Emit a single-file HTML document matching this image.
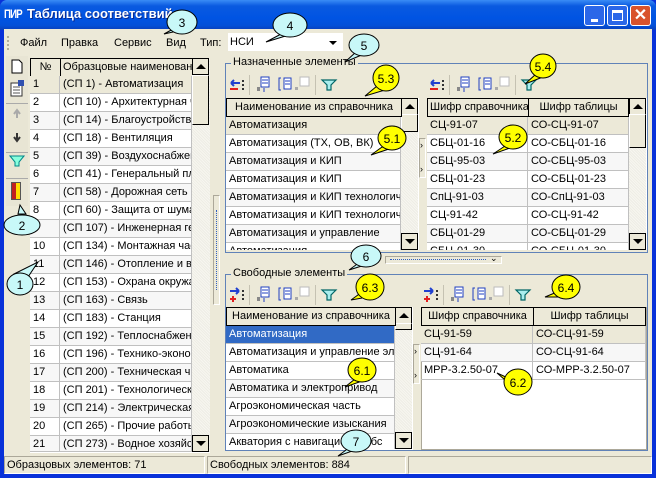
<!DOCTYPE html>
<html><head><meta charset="utf-8"><style>
*{box-sizing:border-box;margin:0;padding:0}
body{width:656px;height:478px;overflow:hidden;background:#0831d9;font-family:"Liberation Sans",sans-serif;font-size:11px;color:#000;position:relative}
.a{position:absolute}
#tb{left:0;top:0;width:656px;height:30px;background:linear-gradient(#3a8cf6,#0a5ae0 20%,#0054e3 60%,#0350d8 85%,#0a3fb8);border-radius:7px 7px 0 0}
#cl{left:4px;top:29px;width:648px;height:445px;background:#ece9d8}
.cell{position:absolute;overflow:hidden;white-space:nowrap;border-right:1px solid #c0c0c0;border-bottom:1px solid #c0c0c0;padding-left:3px;line-height:17px;height:18px}
.hd{position:absolute;border:1px solid #000;border-right:1px solid #000;background:#ece9d8;text-align:center;line-height:16px;white-space:nowrap;overflow:hidden}
.sb{position:absolute;background:#f2f1ea;background-image:repeating-linear-gradient(45deg,#eeede5 0 1px,#f7f6f0 1px 2px)}
.sbb{position:absolute;width:17px;height:17px;background:#ece9d8;border:1px solid #000;}
.sbb:after{content:"";position:absolute;left:3px;border-left:5px solid transparent;border-right:5px solid transparent}
.up:after{top:5px;border-bottom:5px solid #000}
.dn:after{top:5px;border-top:5px solid #000}
.th{position:absolute;width:17px;background:#ece9d8;border:1px solid #000;border-top:1px solid #fff;border-left:1px solid #fff}
.grp{position:absolute;border:1px solid #6082b8}
.gl{position:absolute;background:#ece9d8;padding:0 2px;font-size:11px}
.tbar{position:absolute;height:21px;background:#ece9d8}
</style></head><body>
<div id="tb" class="a"></div>
<div class="a" style="left:4px;top:7px;width:20px;height:16px;color:#fff;font:bold 12px 'Liberation Sans',sans-serif;letter-spacing:-1px;transform:scaleX(0.8);transform-origin:left">ПИР</div>
<div class="a" style="left:27px;top:6px;color:#fff;font:bold 13px 'Liberation Sans',sans-serif;text-shadow:1px 1px #0a2a90">Таблица соответствий</div>
<div class="a" style="left:584px;top:5px;width:21px;height:21px;border:1px solid #fff;border-radius:3px;background:#2b67e8"><div class="a" style="left:6px;top:13px;width:7px;height:3px;background:#fff"></div></div>
<div class="a" style="left:607px;top:5px;width:21px;height:21px;border:1px solid #fff;border-radius:3px;background:#2b67e8"><div class="a" style="left:4px;top:4px;width:11px;height:11px;border:1px solid #fff;border-top:3px solid #fff"></div></div>
<div class="a" style="left:630px;top:5px;width:21px;height:21px;border:1px solid #fff;border-radius:3px;background:#d9532c;color:#fff;font:bold 16px 'Liberation Sans';text-align:center;line-height:19px">✕</div>
<div id="cl" class="a"></div>
<!-- menu -->
<div class="a" style="left:7px;top:36px;width:2px;height:14px;border-left:2px dotted #b0ad9c"></div>
<div class="a" style="left:20px;top:37px">Файл</div>
<div class="a" style="left:61px;top:37px">Правка</div>
<div class="a" style="left:114px;top:37px">Сервис</div>
<div class="a" style="left:166px;top:37px">Вид</div>
<div class="a" style="left:200px;top:37px">Тип:</div>
<div class="a" style="left:228px;top:33px;width:115px;height:18px;background:#fff;padding:3px 0 0 2px">НСИ</div>
<div class="a" style="left:329px;top:41px;border-left:4px solid transparent;border-right:4px solid transparent;border-top:4px solid #000"></div>
<!-- left toolbar -->
<div class="a" style="left:6px;top:56px;width:22px;height:150px;background:#e8e5d4"></div>
<svg class="a" style="left:9px;top:59px" width="16" height="120" viewBox="0 0 16 120">
<path d="M3 1h7l3 3v10H3z" fill="#fff" stroke="#000"/>
<rect x="2" y="24" width="11" height="13" fill="#fff" stroke="#333"/><path d="M4 28h7M4 31h7M4 34h7" stroke="#555"/><rect x="9" y="21" width="6" height="6" fill="#3050b0"/>
<path d="M8 52v7M5 55l3-4 3 4" stroke="#aaa" stroke-width="2" fill="none"/>
<path d="M8 74v6M5 78l3 4 3-4" stroke="#333" stroke-width="2" fill="none"/>
<path d="M1 97h14l-5 6v4h-4v-4z" fill="#8fd" stroke="#088"/>
</svg>
<div class="a" style="left:11px;top:182px;width:10px;height:18px;background:#ffdd00;border:1px solid #555"><div style="width:4px;height:16px;background:#c02020"></div></div>
<div class="a" style="left:6px;top:103px;width:22px;height:1px;background:#aaa"></div>
<div class="a" style="left:6px;top:152px;width:22px;height:1px;background:#aaa"></div>
<div class="a" style="left:6px;top:178px;width:22px;height:1px;background:#aaa"></div>
<!-- left grid -->
<div class="a" style="left:30px;top:58px;width:180px;height:395px;background:#fff;overflow:hidden">
<div class="hd" style="left:0;top:0;width:31px;height:19px">№</div>
<div class="hd" style="left:30px;top:0;width:133px;height:19px;text-align:left;padding-left:2px">Образцовые наименован</div>
</div>
<div class="sb" style="left:192px;top:58px;width:18px;height:394px"></div>
<div class="sbb up" style="left:192px;top:58px"></div>
<div class="th" style="left:192px;top:75px;height:50px"></div>
<!-- splitter -->
<div class="a" style="left:213px;top:195px;width:7px;height:110px;border:1px solid #aca899;border-right-color:#fff;border-bottom-color:#fff"></div>
<div class="a" style="left:216px;top:210px;height:80px;border-left:1px dotted #3060c0"></div>
<!-- group 1 -->
<div class="grp" style="left:225px;top:63px;width:423px;height:190px"></div>
<div class="gl" style="left:231px;top:56px">Назначенные элементы</div>
<div class="tbar" style="left:227px;top:75px;width:124px"></div>
<div class="tbar" style="left:427px;top:75px;width:124px"></div>
<div class="a" style="left:226px;top:98px;width:193px;height:152px;background:#fff;overflow:hidden"></div>
<div class="sb" style="left:401px;top:98px;width:17px;height:152px"></div>
<div class="sbb up" style="left:401px;top:98px"></div>
<div class="th" style="left:401px;top:114px;height:18px"></div>
<div class="sbb dn" style="left:401px;top:233px"></div>
<div class="a" style="left:419px;top:138px;width:7px;height:40px;border:1px solid #aca899;border-right-color:#fff;border-bottom-color:#fff;font-size:9px;line-height:12px">›<br><br>›</div>
<div class="a" style="left:427px;top:98px;width:220px;height:152px;background:#fff;overflow:hidden"></div>
<div class="sb" style="left:629px;top:98px;width:17px;height:152px"></div>
<div class="sbb up" style="left:629px;top:98px"></div>
<div class="th" style="left:629px;top:114px;height:34px"></div>
<div class="sbb dn" style="left:629px;top:233px"></div>
<!-- mid splitter -->
<div class="a" style="left:385px;top:256px;width:117px;height:8px;border:1px solid #aca899;border-right-color:#fff;border-bottom-color:#fff"></div>
<div class="a" style="left:390px;top:259px;width:96px;border-top:1px dotted #3060c0"></div>
<div class="a" style="left:490px;top:253px;font-size:9px">⌄</div>
<!-- group 2 -->
<div class="grp" style="left:225px;top:274px;width:423px;height:177px"></div>
<div class="gl" style="left:231px;top:267px">Свободные элементы</div>
<div class="tbar" style="left:227px;top:285px;width:124px"></div>
<div class="tbar" style="left:421px;top:285px;width:124px"></div>
<div class="a" style="left:226px;top:307px;width:187px;height:143px;background:#fff;overflow:hidden"></div>
<div class="sb" style="left:395px;top:307px;width:17px;height:142px"></div>
<div class="sbb up" style="left:395px;top:307px"></div>
<div class="th" style="left:395px;top:323px;height:7px"></div>
<div class="sbb dn" style="left:395px;top:432px"></div>
<div class="a" style="left:413px;top:344px;width:7px;height:40px;border:1px solid #aca899;border-right-color:#fff;border-bottom-color:#fff;font-size:9px;line-height:12px">›<br><br>›</div>
<div class="a" style="left:421px;top:307px;width:226px;height:143px;background:#fff;overflow:hidden;border:1px solid #aca899"></div>
<!-- status -->
<div class="a" style="left:4px;top:456px;width:201px;height:18px;border:1px solid #aca899;border-right-color:#fff;border-bottom-color:#fff;padding:2px 0 0 2px">Образцовых элементов: 71</div>
<div class="a" style="left:207px;top:456px;width:199px;height:18px;border:1px solid #aca899;border-right-color:#fff;border-bottom-color:#fff;padding:2px 0 0 2px">Свободных элементов: 884</div>
<div class="a" style="left:408px;top:456px;width:244px;height:18px;border:1px solid #aca899;border-right-color:#fff;border-bottom-color:#fff"></div>

<div class="a" style="left:30px;top:76px;width:162px">
<div class="cell" style="left:0;top:0;width:30px;background:#ece9d8">1</div><div class="cell" style="left:30px;top:0;width:132px;background:#ece9d8">(СП 1) - Автоматизация</div>
<div class="cell" style="left:0;top:18px;width:30px">2</div><div class="cell" style="left:30px;top:18px;width:132px">(СП 10) - Архитектурная ч</div>
<div class="cell" style="left:0;top:36px;width:30px;background:#f7f7f7">3</div><div class="cell" style="left:30px;top:36px;width:132px;background:#f7f7f7">(СП 14) - Благоустройство</div>
<div class="cell" style="left:0;top:54px;width:30px">4</div><div class="cell" style="left:30px;top:54px;width:132px">(СП 18) - Вентиляция</div>
<div class="cell" style="left:0;top:72px;width:30px;background:#f7f7f7">5</div><div class="cell" style="left:30px;top:72px;width:132px;background:#f7f7f7">(СП 39) - Воздухоснабжен</div>
<div class="cell" style="left:0;top:90px;width:30px">6</div><div class="cell" style="left:30px;top:90px;width:132px">(СП 41) - Генеральный пл</div>
<div class="cell" style="left:0;top:108px;width:30px;background:#f7f7f7">7</div><div class="cell" style="left:30px;top:108px;width:132px;background:#f7f7f7">(СП 58) - Дорожная сеть</div>
<div class="cell" style="left:0;top:126px;width:30px">8</div><div class="cell" style="left:30px;top:126px;width:132px">(СП 60) - Защита от шума</div>
<div class="cell" style="left:0;top:144px;width:30px;background:#f7f7f7">9</div><div class="cell" style="left:30px;top:144px;width:132px;background:#f7f7f7">(СП 107) - Инженерная ге</div>
<div class="cell" style="left:0;top:162px;width:30px">10</div><div class="cell" style="left:30px;top:162px;width:132px">(СП 134) - Монтажная час</div>
<div class="cell" style="left:0;top:180px;width:30px;background:#f7f7f7">11</div><div class="cell" style="left:30px;top:180px;width:132px;background:#f7f7f7">(СП 146) - Отопление и ве</div>
<div class="cell" style="left:0;top:198px;width:30px">12</div><div class="cell" style="left:30px;top:198px;width:132px">(СП 153) - Охрана окружа</div>
<div class="cell" style="left:0;top:216px;width:30px;background:#f7f7f7">13</div><div class="cell" style="left:30px;top:216px;width:132px;background:#f7f7f7">(СП 163) - Связь</div>
<div class="cell" style="left:0;top:234px;width:30px">14</div><div class="cell" style="left:30px;top:234px;width:132px">(СП 183) - Станция</div>
<div class="cell" style="left:0;top:252px;width:30px;background:#f7f7f7">15</div><div class="cell" style="left:30px;top:252px;width:132px;background:#f7f7f7">(СП 192) - Теплоснабжен</div>
<div class="cell" style="left:0;top:270px;width:30px">16</div><div class="cell" style="left:30px;top:270px;width:132px">(СП 196) - Технико-эконо</div>
<div class="cell" style="left:0;top:288px;width:30px;background:#f7f7f7">17</div><div class="cell" style="left:30px;top:288px;width:132px;background:#f7f7f7">(СП 200) - Техническая ч</div>
<div class="cell" style="left:0;top:306px;width:30px">18</div><div class="cell" style="left:30px;top:306px;width:132px">(СП 201) - Технологическ</div>
<div class="cell" style="left:0;top:324px;width:30px;background:#f7f7f7">19</div><div class="cell" style="left:30px;top:324px;width:132px;background:#f7f7f7">(СП 214) - Электрическая</div>
<div class="cell" style="left:0;top:342px;width:30px">20</div><div class="cell" style="left:30px;top:342px;width:132px">(СП 265) - Прочие работы</div>
<div class="cell" style="left:0;top:360px;width:30px;background:#f7f7f7;height:16px">21</div><div class="cell" style="left:30px;top:360px;width:132px;background:#f7f7f7;height:16px">(СП 273) - Водное хозяйс</div>
</div>
<div class="sbb dn" style="left:192px;top:435px"></div>

<div class="hd" style="left:226px;top:98px;width:176px;height:19px">Наименование из справочника</div>
<div class="a" style="left:226px;top:117px;width:175px;height:133px;overflow:hidden">
<div class="cell" style="top:0;width:175px;background:#ece9d8">Автоматизация</div>
<div class="cell" style="top:18px;width:175px">Автоматизация (ТХ, ОВ, ВК)</div>
<div class="cell" style="top:36px;width:175px;background:#f7f7f7">Автоматизация и КИП</div>
<div class="cell" style="top:54px;width:175px">Автоматизация и КИП</div>
<div class="cell" style="top:72px;width:175px;background:#f7f7f7">Автоматизация и КИП технологич</div>
<div class="cell" style="top:90px;width:175px">Автоматизация и КИП технологич</div>
<div class="cell" style="top:108px;width:175px;background:#f7f7f7">Автоматизация и управление</div>
<div class="cell" style="top:126px;width:175px">Автоматизация</div>
</div>
<div class="hd" style="left:427px;top:98px;width:102px;height:19px;text-align:left;padding-left:2px">Шифр справочника</div>
<div class="hd" style="left:528px;top:98px;width:101px;height:19px">Шифр таблицы</div>
<div class="a" style="left:427px;top:117px;width:202px;height:133px;overflow:hidden">
<div class="cell" style="top:0;width:101px;background:#ece9d8">СЦ-91-07</div><div class="cell" style="left:101px;top:0;width:101px;background:#ece9d8">СО-СЦ-91-07</div>
<div class="cell" style="top:18px;width:101px">СБЦ-01-16</div><div class="cell" style="left:101px;top:18px;width:101px">СО-СБЦ-01-16</div>
<div class="cell" style="top:36px;width:101px;background:#f7f7f7">СБЦ-95-03</div><div class="cell" style="left:101px;top:36px;width:101px;background:#f7f7f7">СО-СБЦ-95-03</div>
<div class="cell" style="top:54px;width:101px">СБЦ-01-23</div><div class="cell" style="left:101px;top:54px;width:101px">СО-СБЦ-01-23</div>
<div class="cell" style="top:72px;width:101px;background:#f7f7f7">СпЦ-91-03</div><div class="cell" style="left:101px;top:72px;width:101px;background:#f7f7f7">СО-СпЦ-91-03</div>
<div class="cell" style="top:90px;width:101px">СЦ-91-42</div><div class="cell" style="left:101px;top:90px;width:101px">СО-СЦ-91-42</div>
<div class="cell" style="top:108px;width:101px;background:#f7f7f7">СБЦ-01-29</div><div class="cell" style="left:101px;top:108px;width:101px;background:#f7f7f7">СО-СБЦ-01-29</div>
<div class="cell" style="top:126px;width:101px">СБЦ-01-30</div><div class="cell" style="left:101px;top:126px;width:101px">СО-СБЦ-01-30</div>
</div>

<div class="hd" style="left:226px;top:307px;width:170px;height:19px">Наименование из справочника</div>
<div class="a" style="left:226px;top:326px;width:169px;height:123px;overflow:hidden">
<div class="cell" style="top:0;width:169px;background:#316ac5;color:#fff">Автоматизация</div>
<div class="cell" style="top:18px;width:169px">Автоматизация и управление эл</div>
<div class="cell" style="top:36px;width:169px">Автоматика</div>
<div class="cell" style="top:54px;width:169px;background:#f7f7f7">Автоматика и электропривод</div>
<div class="cell" style="top:72px;width:169px">Агроэкономическая часть</div>
<div class="cell" style="top:90px;width:169px;background:#f7f7f7">Агроэкономические изыскания</div>
<div class="cell" style="top:108px;width:169px">Акватория с навигацией и обс</div>
</div>
<div class="hd" style="left:421px;top:307px;width:113px;height:19px">Шифр справочника</div>
<div class="hd" style="left:533px;top:307px;width:113px;height:19px">Шифр таблицы</div>
<div class="a" style="left:421px;top:326px;width:225px;height:60px;overflow:hidden">
<div class="cell" style="top:0;width:112px;background:#ece9d8">СЦ-91-59</div><div class="cell" style="left:112px;top:0;width:113px;background:#ece9d8">СО-СЦ-91-59</div>
<div class="cell" style="top:18px;width:112px;background:#f7f7f7">СЦ-91-64</div><div class="cell" style="left:112px;top:18px;width:113px;background:#f7f7f7">СО-СЦ-91-64</div>
<div class="cell" style="top:36px;width:112px">МРР-3.2.50-07</div><div class="cell" style="left:112px;top:36px;width:113px">СО-МРР-3.2.50-07</div>
</div>

<svg class="a" style="left:227px;top:75px" width="420" height="232" viewBox="0 0 420 232">
<defs><g id="tb2">
<rect x="22" y="0" width="1" height="20" fill="#c5c2b2"/>
<rect x="34" y="2" width="8" height="10" fill="#fff" stroke="#2040c0"/><path d="M35 5h6M35 8h6" stroke="#2040c0"/><path d="M30 12h3v4h-3z" fill="#888"/><path d="M37 13v4" stroke="#2040c0"/>
<path d="M54 3h-2v12h2" stroke="#2040c0" fill="none"/><rect x="57" y="3" width="7" height="11" fill="#fff" stroke="#2040c0"/><path d="M58 6h5M58 9h5" stroke="#2040c0"/>
<rect x="73" y="2" width="9" height="9" fill="#fff" stroke="#bbb"/><path d="M68 12h3v3h-3z" fill="#aaa"/>
<rect x="88" y="0" width="1" height="20" fill="#c5c2b2"/>
<path d="M95 5h14l-5 5v5h-4v-5z" fill="#aee" stroke="#066" stroke-width="1.2"/>
<path d="M16 5v2M16 9v2M16 13v2" stroke="#333" stroke-width="2"/>
</g>
<g id="tl"><path d="M4 8h9M4 8l3-3M4 8l3 3" stroke="#2040d0" stroke-width="2" fill="none"/><path d="M3 14h8" stroke="#e02020" stroke-width="2"/></g>
<g id="tr"><path d="M3 6h9M12 6l-3-3M12 6l-3 3" stroke="#2040d0" stroke-width="2" fill="none"/><path d="M3 14h6M6 11v6" stroke="#e02020" stroke-width="2"/></g>
</defs>
<use href="#tb2"/><use href="#tl"/><use href="#tb2" x="200"/><use href="#tl" x="200"/>
<use href="#tb2" y="210"/><use href="#tr" y="210"/><use href="#tb2" x="194" y="210"/><use href="#tr" x="194" y="210"/>
</svg>

<svg class="a" style="left:0;top:0" width="656" height="478" viewBox="0 0 656 478" fill="none" stroke="#000">
<g fill="#c8f8f8">
<path d="M14 274 L38 262 L26 280 Z"/><ellipse cx="20" cy="284" rx="13" ry="11"/>
<path d="M18 214 L20 205 L26 214 Z"/><ellipse cx="22" cy="225" rx="18" ry="10"/>
<path d="M175 28 L164 34 L182 30 Z"/><ellipse cx="182" cy="22" rx="15" ry="12"/>
<path d="M283 33 L266 42 L292 34 Z"/><ellipse cx="290" cy="25" rx="17" ry="12"/>
<path d="M356 52 L345 62 L364 54 Z"/><ellipse cx="364" cy="45" rx="15" ry="11"/>
<path d="M360 262 L349 270 L368 264 Z"/><ellipse cx="366" cy="256" rx="15" ry="11"/>
<path d="M350 447 L338 456 L358 449 Z"/><ellipse cx="356" cy="441" rx="15" ry="11"/>
</g>
<g fill="#ffff00">
<path d="M377 86 L365 96 L385 90 Z"/><ellipse cx="386" cy="78" rx="13" ry="13"/>
<path d="M536 74 L525 84 L543 77 Z"/><ellipse cx="543" cy="66" rx="13" ry="12"/>
<path d="M382 147 L371 155 L392 148 Z"/><ellipse cx="392" cy="138" rx="14" ry="12"/>
<path d="M505 146 L493 154 L513 147 Z"/><ellipse cx="513" cy="137" rx="14" ry="12"/>
<path d="M362 292 L351 300 L368 297 Z"/><ellipse cx="370" cy="287" rx="14" ry="13"/>
<path d="M557 292 L545 297 L564 297 Z"/><ellipse cx="566" cy="287" rx="14" ry="12"/>
<path d="M355 379 L345 387 L365 380 Z"/><ellipse cx="362" cy="370" rx="14" ry="12"/>
<path d="M508 378 L497 373 L512 386 Z"/><ellipse cx="518" cy="382" rx="14" ry="13"/>
</g>
<g fill="#000" stroke="none" font-family="Liberation Sans,sans-serif" font-size="12" text-anchor="middle">
<text x="20" y="289">1</text><text x="22" y="230">2</text><text x="182" y="27">3</text><text x="290" y="30">4</text><text x="364" y="50">5</text><text x="366" y="261">6</text><text x="356" y="446">7</text>
<text x="386" y="83">5.3</text><text x="543" y="71">5.4</text><text x="392" y="143">5.1</text><text x="513" y="142">5.2</text><text x="370" y="292">6.3</text><text x="566" y="292">6.4</text><text x="362" y="375">6.1</text><text x="518" y="387">6.2</text>
</g>
</svg>
</body></html>
